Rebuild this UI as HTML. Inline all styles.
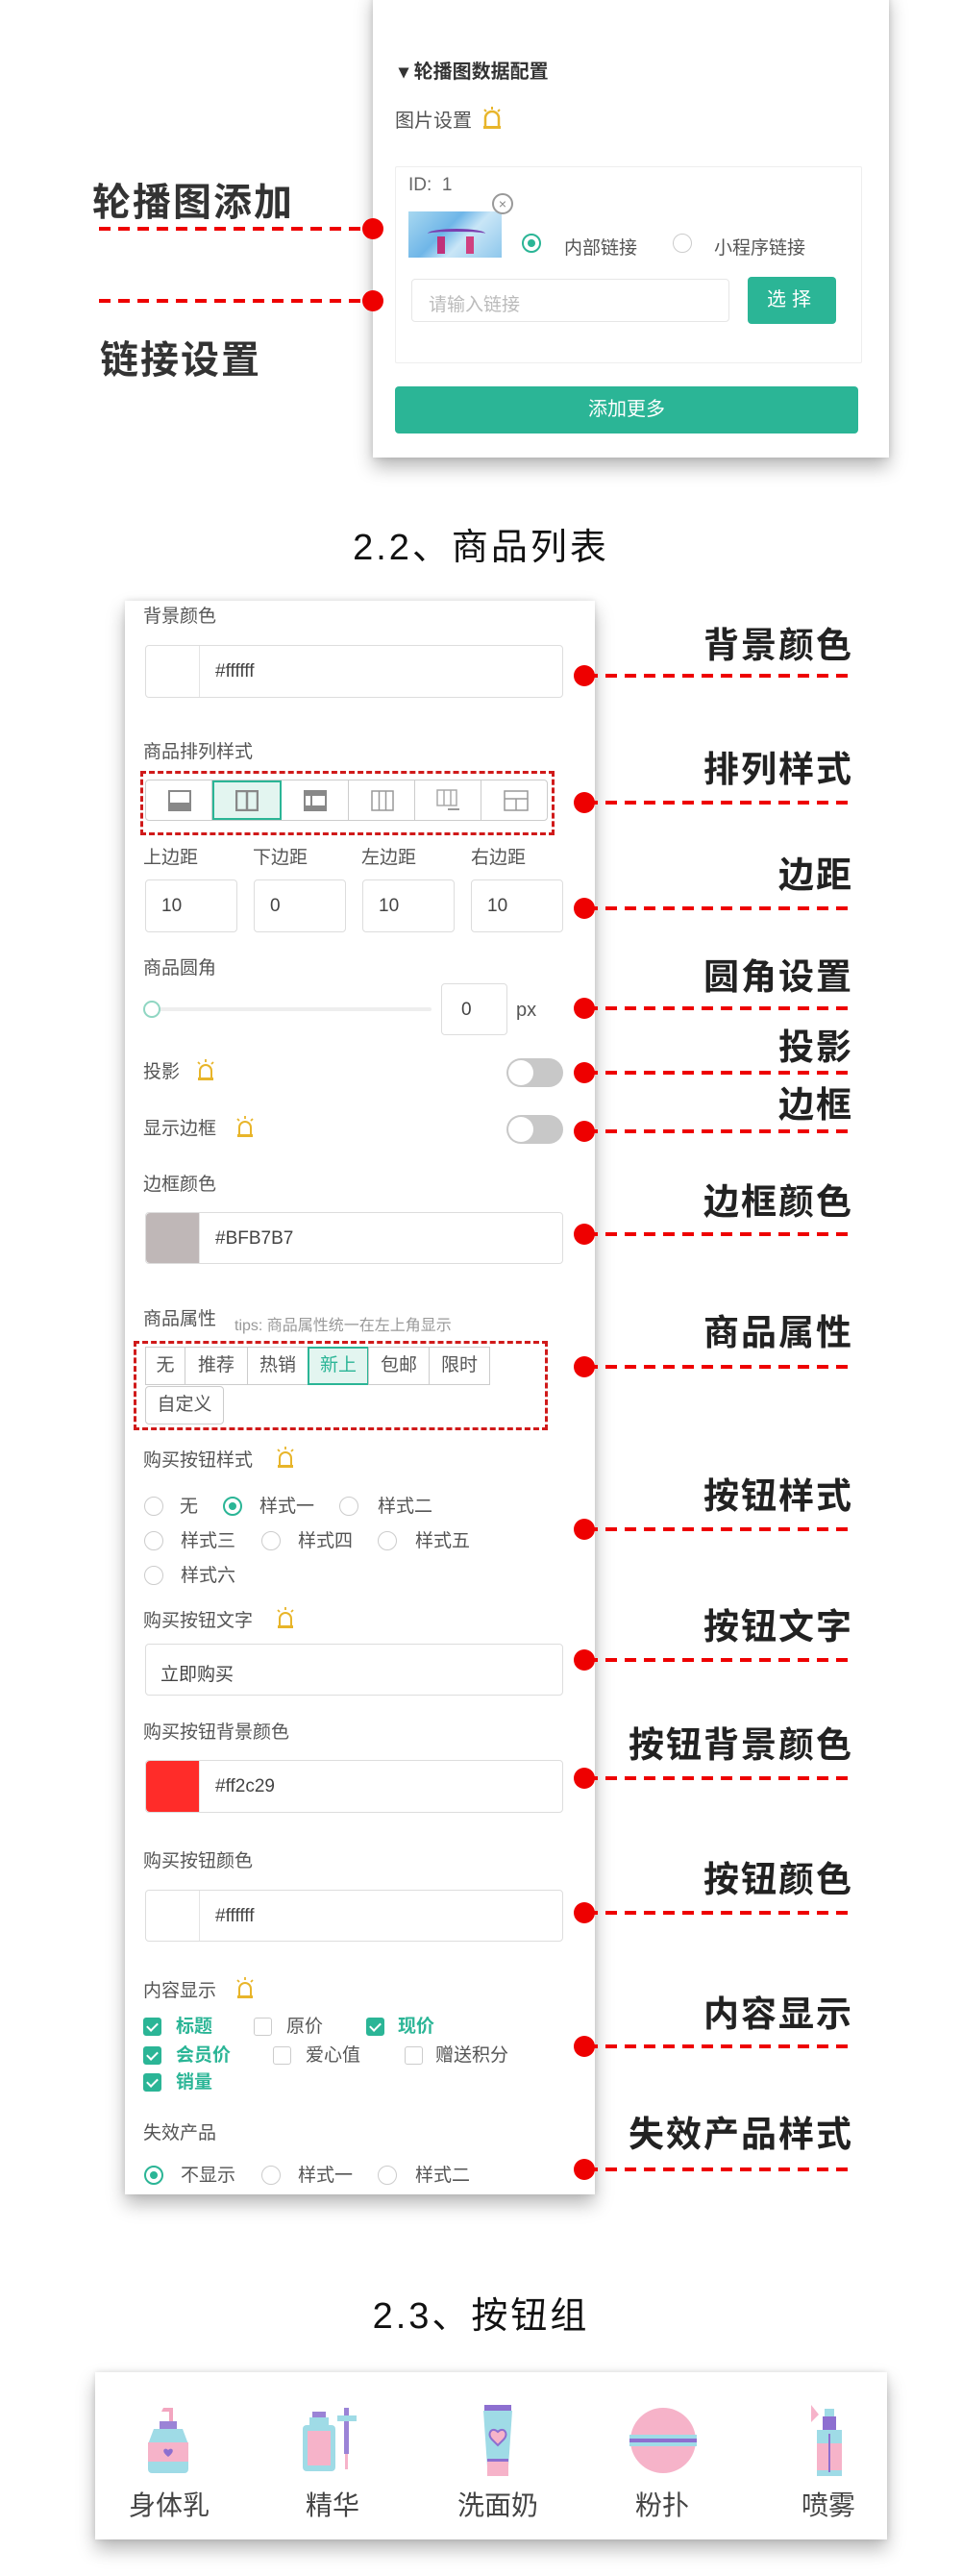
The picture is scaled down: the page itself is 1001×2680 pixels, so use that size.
<!DOCTYPE html>
<html><head><meta charset="utf-8">
<style>
*{margin:0;padding:0;box-sizing:border-box}
body{width:1001px;height:2680px;background:#fff;position:relative;overflow:hidden;font-family:"Liberation Sans","Noto Sans CJK SC",sans-serif;color:#555}
.a{position:absolute;white-space:nowrap}
.panel{position:absolute;background:#fff;box-shadow:0 10px 18px rgba(0,0,0,.28),0 0 6px rgba(0,0,0,.12)}
.lbl{position:absolute;font-size:19px;color:#555;line-height:1;white-space:nowrap}
.inp{position:absolute;border:1px solid #ddd;border-radius:4px;background:#fff}
.ann{position:absolute;font-size:37px;font-weight:bold;color:#222;text-align:right;right:113px;line-height:1;letter-spacing:2px;white-space:nowrap}
.line{position:absolute;height:4px;background:repeating-linear-gradient(90deg,#e00 0 12px,transparent 12px 20px)}
.dot{position:absolute;width:22px;height:22px;border-radius:50%;background:#e00}
.radio{position:absolute;width:20px;height:20px;border:1.5px solid #ccc;border-radius:50%;background:#fff}
.radio.on{border:2px solid #2bb596}
.radio.on::after{content:"";position:absolute;left:4px;top:4px;width:8px;height:8px;border-radius:50%;background:#2bb596}
.cb{position:absolute;width:19px;height:19px;border:1.5px solid #ccc;border-radius:3px;background:#fff}
.cb.on{background:#2bb596;border-color:#2bb596}
.cb.on::after{content:"";position:absolute;left:5px;top:2px;width:5px;height:9px;border:solid #fff;border-width:0 2px 2px 0;transform:rotate(45deg)}
.tog{position:absolute;width:59px;height:30px;border-radius:15px;background:#c8c8c8}
.tog::after{content:"";position:absolute;left:2px;top:2px;width:26px;height:26px;border-radius:50%;background:#fff}
.tag{position:absolute;height:40px;border:1px solid #ccc;font-size:19px;color:#555;line-height:38px;text-align:center;background:#fff}
.sw{position:absolute;left:0;top:0;bottom:0;width:56px;border-right:1px solid #e5e5e5;border-radius:4px 0 0 4px}
</style></head><body>

<!-- top panel -->
<div class="panel" style="left:388px;top:-10px;width:537px;height:486px"></div>
<div class="a" style="left:415px;top:58px;font-size:20px;font-weight:bold;color:#333">▾ 轮播图数据配置</div>
<div class="lbl" style="left:411px;top:116px;font-size:20px">图片设置</div>
<svg class="a" style="left:501px;top:110px" width="22" height="26" viewBox="0 0 22 26"><path d="M4 22V13a7 7 0 0 1 14 0v9" fill="none" stroke="#e8b52a" stroke-width="2.5"/><rect x="2" y="21" width="18" height="3" fill="#e8b52a"/><path d="M11 1v3M3 4l2 2M19 4l-2 2" stroke="#e8b52a" stroke-width="2"/></svg>
<div class="inp" style="left:411px;top:173px;width:486px;height:205px;border-color:#eee;border-radius:2px"></div>
<div class="a" style="left:425px;top:182px;font-size:19px;color:#666">ID:&nbsp;&nbsp;1</div>
<div class="a" style="left:425px;top:220px;width:97px;height:48px;background:linear-gradient(135deg,#a8d8f0,#6fb6e8 40%,#c9e6f7 60%,#8ec7ec);overflow:hidden">
<div style="position:absolute;left:20px;top:18px;width:60px;height:10px;border-top:3px solid #7a3fb0;border-radius:50%"></div>
<div style="position:absolute;left:30px;top:26px;width:8px;height:18px;background:#c0307a"></div>
<div style="position:absolute;left:60px;top:26px;width:8px;height:18px;background:#d04080"></div>
</div>
<div class="a" style="left:512px;top:201px;width:22px;height:22px;border:2px solid #999;border-radius:50%;background:#fff;font-size:14px;line-height:18px;text-align:center;color:#888">×</div>
<div class="radio on" style="left:543px;top:243px"></div>
<div class="a" style="left:587px;top:243px;font-size:19px;color:#555">内部链接</div>
<div class="radio" style="left:700px;top:243px"></div>
<div class="a" style="left:743px;top:243px;font-size:19px;color:#555">小程序链接</div>
<div class="inp" style="left:428px;top:290px;width:331px;height:45px;border-color:#e6e6e6"></div>
<div class="a" style="left:446px;top:302px;font-size:19px;color:#bbb">请输入链接</div>
<div class="a" style="left:778px;top:288px;width:92px;height:49px;background:#2bb596;border-radius:4px;color:#fff;font-size:20px;line-height:49px;text-align:center;letter-spacing:6px">选择</div>
<div class="a" style="left:411px;top:402px;width:482px;height:49px;background:#2bb596;border-radius:4px;color:#fff;font-size:20px;line-height:49px;text-align:center">添加更多</div>

<div class="a" style="left:96px;top:178px;font-size:40px;font-weight:bold;color:#333;letter-spacing:2px">轮播图添加</div>
<div class="line" style="left:103px;top:236px;width:280px"></div><div class="dot" style="left:377px;top:227px"></div>
<div class="line" style="left:103px;top:311px;width:280px"></div><div class="dot" style="left:377px;top:302px"></div>
<div class="a" style="left:104px;top:342px;font-size:40px;font-weight:bold;color:#333;letter-spacing:2px">链接设置</div>

<div class="a" style="left:0;width:1001px;top:538px;text-align:center;font-size:38px;color:#111;letter-spacing:3px">2.2、商品列表</div>

<!-- main panel -->
<div class="panel" style="left:130px;top:625px;width:489px;height:1658px"></div>
<div class="lbl" style="left:149px;top:632px">背景颜色</div>
<div class="inp" style="left:151px;top:671px;width:435px;height:55px"><div class="sw"></div><span class="a" style="left:72px;top:16px;font-size:19px;color:#444">#ffffff</span></div>

<div class="lbl" style="left:149px;top:773px">商品排列样式</div>
<div class="a" style="left:146px;top:802px;width:431px;height:67px;border:3px dashed #d01a1a"></div>
<div class="a" style="left:151px;top:811px;width:419px;height:43px;border:1px solid #ccc;border-radius:4px;display:flex;overflow:hidden">
<div style="flex:1;border-right:1px solid #ccc;position:relative"><svg style="position:absolute;left:23px;top:10px" width="24" height="22"><rect x="1" y="1" width="22" height="20" fill="none" stroke="#888" stroke-width="2"/><rect x="1" y="13" width="22" height="8" fill="#888"/></svg></div>
<div style="flex:1;border:2px solid #2bb596;background:#e3f5f0;position:relative"><svg style="position:absolute;left:22px;top:8px" width="24" height="22"><rect x="1" y="1" width="22" height="20" fill="none" stroke="#888" stroke-width="2.5"/><line x1="12" y1="1" x2="12" y2="21" stroke="#888" stroke-width="2.5"/></svg></div>
<div style="flex:1;border-right:1px solid #ccc;position:relative"><svg style="position:absolute;left:23px;top:10px" width="24" height="22"><rect x="1" y="1" width="22" height="20" fill="none" stroke="#888" stroke-width="2"/><rect x="1" y="1" width="22" height="5" fill="#888"/><rect x="1" y="16" width="22" height="5" fill="#888"/><line x1="8" y1="6" x2="8" y2="16" stroke="#888" stroke-width="2"/></svg></div>
<div style="flex:1;border-right:1px solid #ccc;position:relative"><svg style="position:absolute;left:23px;top:10px" width="24" height="22"><rect x="1" y="1" width="22" height="20" fill="none" stroke="#999" stroke-width="1.5"/><line x1="8.5" y1="1" x2="8.5" y2="21" stroke="#999" stroke-width="1.5"/><line x1="15.5" y1="1" x2="15.5" y2="21" stroke="#999" stroke-width="1.5"/></svg></div>
<div style="flex:1;border-right:1px solid #ccc;position:relative"><svg style="position:absolute;left:22px;top:9px" width="26" height="24"><rect x="1" y="1" width="20" height="16" fill="none" stroke="#aaa" stroke-width="1.5"/><line x1="8" y1="1" x2="8" y2="17" stroke="#aaa" stroke-width="1.5"/><line x1="15" y1="1" x2="15" y2="17" stroke="#aaa" stroke-width="1.5"/><line x1="12" y1="21" x2="24" y2="21" stroke="#999" stroke-width="2"/></svg></div>
<div style="flex:1;position:relative"><svg style="position:absolute;left:23px;top:10px" width="26" height="22"><rect x="1" y="1" width="24" height="20" fill="none" stroke="#999" stroke-width="1.5"/><line x1="1" y1="9" x2="25" y2="9" stroke="#999" stroke-width="1.5"/><line x1="13" y1="9" x2="13" y2="21" stroke="#999" stroke-width="1.5"/></svg></div>
</div>

<div class="lbl" style="left:149px;top:883px">上边距</div><div class="lbl" style="left:263px;top:883px">下边距</div><div class="lbl" style="left:376px;top:883px">左边距</div><div class="lbl" style="left:490px;top:883px">右边距</div>
<div class="inp" style="left:151px;top:915px;width:96px;height:55px"><span class="a" style="left:16px;top:16px;font-size:19px;color:#444">10</span></div>
<div class="inp" style="left:264px;top:915px;width:96px;height:55px"><span class="a" style="left:16px;top:16px;font-size:19px;color:#444">0</span></div>
<div class="inp" style="left:377px;top:915px;width:96px;height:55px"><span class="a" style="left:16px;top:16px;font-size:19px;color:#444">10</span></div>
<div class="inp" style="left:490px;top:915px;width:96px;height:55px"><span class="a" style="left:16px;top:16px;font-size:19px;color:#444">10</span></div>

<div class="lbl" style="left:149px;top:998px">商品圆角</div>
<div class="a" style="left:158px;top:1048px;width:291px;height:4px;background:#eee;border-radius:2px"></div>
<div class="a" style="left:149px;top:1041px;width:18px;height:18px;border:2px solid #8fd6c2;border-radius:50%;background:#fff"></div>
<div class="inp" style="left:459px;top:1023px;width:69px;height:54px"><span class="a" style="left:20px;top:16px;font-size:19px;color:#444">0</span></div>
<div class="a" style="left:537px;top:1040px;font-size:20px;color:#555">px</div>

<div class="lbl" style="left:149px;top:1106px">投影</div>
<svg class="a" style="left:204px;top:1102px" width="20" height="24" viewBox="0 0 20 24"><path d="M4 20v-8a6 6 0 0 1 12 0v8" fill="none" stroke="#e8b52a" stroke-width="2"/><rect x="2" y="19" width="16" height="3" fill="#e8b52a"/><path d="M10 0v3M2 3l2 2M18 3l-2 2" stroke="#e8b52a" stroke-width="1.8"/></svg>
<div class="tog" style="left:527px;top:1101px"></div>
<div class="lbl" style="left:149px;top:1165px">显示边框</div>
<svg class="a" style="left:245px;top:1161px" width="20" height="24" viewBox="0 0 20 24"><path d="M4 20v-8a6 6 0 0 1 12 0v8" fill="none" stroke="#e8b52a" stroke-width="2"/><rect x="2" y="19" width="16" height="3" fill="#e8b52a"/><path d="M10 0v3M2 3l2 2M18 3l-2 2" stroke="#e8b52a" stroke-width="1.8"/></svg>
<div class="tog" style="left:527px;top:1160px"></div>

<div class="lbl" style="left:149px;top:1223px">边框颜色</div>
<div class="inp" style="left:151px;top:1261px;width:435px;height:54px"><div class="sw" style="background:#bfb7b7"></div><span class="a" style="left:72px;top:16px;font-size:19px;color:#444">#BFB7B7</span></div>

<div class="lbl" style="left:149px;top:1363px">商品属性</div>
<div class="a" style="left:244px;top:1365px;font-size:16px;color:#999">tips: 商品属性统一在左上角显示</div>
<div class="a" style="left:139px;top:1395px;width:431px;height:93px;border:3px dashed #d01a1a"></div>
<div class="tag" style="left:151px;top:1401px;width:42px">无</div>
<div class="tag" style="left:192px;top:1401px;width:66px">推荐</div>
<div class="tag" style="left:257px;top:1401px;width:64px">热销</div>
<div class="tag" style="left:320px;top:1401px;width:64px;border:2px solid #2bb596;background:#e3f5f0;color:#2bb596;line-height:36px">新上</div>
<div class="tag" style="left:383px;top:1401px;width:64px">包邮</div>
<div class="tag" style="left:446px;top:1401px;width:64px">限时</div>
<div class="tag" style="left:151px;top:1442px;width:82px;border-radius:4px">自定义</div>

<div class="lbl" style="left:149px;top:1510px">购买按钮样式</div>
<svg class="a" style="left:287px;top:1505px" width="20" height="24" viewBox="0 0 20 24"><path d="M4 20v-8a6 6 0 0 1 12 0v8" fill="none" stroke="#e8b52a" stroke-width="2"/><rect x="2" y="19" width="16" height="3" fill="#e8b52a"/><path d="M10 0v3M2 3l2 2M18 3l-2 2" stroke="#e8b52a" stroke-width="1.8"/></svg>
<div class="radio" style="left:150px;top:1557px"></div><div class="lbl" style="left:187px;top:1558px">无</div>
<div class="radio on" style="left:232px;top:1557px"></div><div class="lbl" style="left:270px;top:1558px">样式一</div>
<div class="radio" style="left:353px;top:1557px"></div><div class="lbl" style="left:393px;top:1558px">样式二</div>
<div class="radio" style="left:150px;top:1593px"></div><div class="lbl" style="left:188px;top:1594px">样式三</div>
<div class="radio" style="left:272px;top:1593px"></div><div class="lbl" style="left:310px;top:1594px">样式四</div>
<div class="radio" style="left:393px;top:1593px"></div><div class="lbl" style="left:432px;top:1594px">样式五</div>
<div class="radio" style="left:150px;top:1629px"></div><div class="lbl" style="left:188px;top:1630px">样式六</div>

<div class="lbl" style="left:149px;top:1677px">购买按钮文字</div>
<svg class="a" style="left:287px;top:1672px" width="20" height="24" viewBox="0 0 20 24"><path d="M4 20v-8a6 6 0 0 1 12 0v8" fill="none" stroke="#e8b52a" stroke-width="2"/><rect x="2" y="19" width="16" height="3" fill="#e8b52a"/><path d="M10 0v3M2 3l2 2M18 3l-2 2" stroke="#e8b52a" stroke-width="1.8"/></svg>
<div class="inp" style="left:151px;top:1710px;width:435px;height:54px"><span class="a" style="left:15px;top:16px;font-size:19px;color:#444">立即购买</span></div>

<div class="lbl" style="left:149px;top:1793px">购买按钮背景颜色</div>
<div class="inp" style="left:151px;top:1831px;width:435px;height:55px"><div class="sw" style="background:#ff2c29"></div><span class="a" style="left:72px;top:16px;font-size:19px;color:#444">#ff2c29</span></div>

<div class="lbl" style="left:149px;top:1927px">购买按钮颜色</div>
<div class="inp" style="left:151px;top:1966px;width:435px;height:54px"><div class="sw"></div><span class="a" style="left:72px;top:16px;font-size:19px;color:#444">#ffffff</span></div>

<div class="lbl" style="left:149px;top:2062px">内容显示</div>
<svg class="a" style="left:245px;top:2057px" width="20" height="24" viewBox="0 0 20 24"><path d="M4 20v-8a6 6 0 0 1 12 0v8" fill="none" stroke="#e8b52a" stroke-width="2"/><rect x="2" y="19" width="16" height="3" fill="#e8b52a"/><path d="M10 0v3M2 3l2 2M18 3l-2 2" stroke="#e8b52a" stroke-width="1.8"/></svg>
<div class="cb on" style="left:149px;top:2099px"></div><div class="lbl" style="left:183px;top:2099px;color:#2bb596;font-weight:bold">标题</div>
<div class="cb" style="left:264px;top:2099px"></div><div class="lbl" style="left:298px;top:2099px">原价</div>
<div class="cb on" style="left:381px;top:2099px"></div><div class="lbl" style="left:414px;top:2099px;color:#2bb596;font-weight:bold">现价</div>
<div class="cb on" style="left:149px;top:2129px"></div><div class="lbl" style="left:183px;top:2129px;color:#2bb596;font-weight:bold">会员价</div>
<div class="cb" style="left:284px;top:2129px"></div><div class="lbl" style="left:318px;top:2129px">爱心值</div>
<div class="cb" style="left:421px;top:2129px"></div><div class="lbl" style="left:453px;top:2129px">赠送积分</div>
<div class="cb on" style="left:149px;top:2157px"></div><div class="lbl" style="left:183px;top:2157px;color:#2bb596;font-weight:bold">销量</div>

<div class="lbl" style="left:149px;top:2210px">失效产品</div>
<div class="radio on" style="left:150px;top:2253px"></div><div class="lbl" style="left:188px;top:2254px">不显示</div>
<div class="radio" style="left:272px;top:2253px"></div><div class="lbl" style="left:310px;top:2254px">样式一</div>
<div class="radio" style="left:393px;top:2253px"></div><div class="lbl" style="left:432px;top:2254px">样式二</div>

<!-- annotations -->
<div class="ann" style="top:653px">背景颜色</div><div class="dot" style="left:597px;top:692px"></div><div class="line" style="left:610px;top:701px;width:275px"></div>
<div class="ann" style="top:782px">排列样式</div><div class="dot" style="left:597px;top:824px"></div><div class="line" style="left:610px;top:833px;width:275px"></div>
<div class="ann" style="top:892px">边距</div><div class="dot" style="left:597px;top:934px"></div><div class="line" style="left:610px;top:943px;width:275px"></div>
<div class="ann" style="top:998px">圆角设置</div><div class="dot" style="left:597px;top:1038px"></div><div class="line" style="left:610px;top:1047px;width:275px"></div>
<div class="ann" style="top:1071px">投影</div><div class="dot" style="left:597px;top:1105px"></div><div class="line" style="left:610px;top:1114px;width:275px"></div>
<div class="ann" style="top:1131px">边框</div><div class="dot" style="left:597px;top:1166px"></div><div class="line" style="left:610px;top:1175px;width:275px"></div>
<div class="ann" style="top:1232px">边框颜色</div><div class="dot" style="left:597px;top:1273px"></div><div class="line" style="left:610px;top:1282px;width:275px"></div>
<div class="ann" style="top:1368px">商品属性</div><div class="dot" style="left:597px;top:1411px"></div><div class="line" style="left:610px;top:1420px;width:275px"></div>
<div class="ann" style="top:1538px">按钮样式</div><div class="dot" style="left:597px;top:1580px"></div><div class="line" style="left:610px;top:1589px;width:275px"></div>
<div class="ann" style="top:1674px">按钮文字</div><div class="dot" style="left:597px;top:1716px"></div><div class="line" style="left:610px;top:1725px;width:275px"></div>
<div class="ann" style="top:1797px">按钮背景颜色</div><div class="dot" style="left:597px;top:1839px"></div><div class="line" style="left:610px;top:1848px;width:275px"></div>
<div class="ann" style="top:1937px">按钮颜色</div><div class="dot" style="left:597px;top:1979px"></div><div class="line" style="left:610px;top:1988px;width:275px"></div>
<div class="ann" style="top:2077px">内容显示</div><div class="dot" style="left:597px;top:2118px"></div><div class="line" style="left:610px;top:2127px;width:275px"></div>
<div class="ann" style="top:2202px">失效产品样式</div><div class="dot" style="left:597px;top:2246px"></div><div class="line" style="left:610px;top:2255px;width:275px"></div>

<div class="a" style="left:0;width:1001px;top:2378px;text-align:center;font-size:38px;color:#111;letter-spacing:3px">2.3、按钮组</div>

<!-- button group panel -->
<div class="panel" style="left:99px;top:2468px;width:824px;height:174px"></div>
<svg class="a" style="left:148px;top:2503px" width="54" height="72" viewBox="0 0 54 72">
<path d="M22 2h10v14h-4V6h-8z" fill="#f3a6c0"/><rect x="18" y="16" width="18" height="8" fill="#9b83d6"/>
<path d="M12 24h30l6 16v26a4 4 0 0 1-4 4H10a4 4 0 0 1-4-4V40z" fill="#9fdbe6"/>
<rect x="6" y="38" width="42" height="20" fill="#f6b3c9"/><path d="M23 45a3 3 0 0 1 4 1a3 3 0 0 1 4-1c2 2 0 5-4 8c-4-3-6-6-4-8z" fill="#8d6fd0"/></svg>
<svg class="a" style="left:313px;top:2503px" width="66" height="72" viewBox="0 0 66 72">
<rect x="12" y="6" width="14" height="6" fill="#9b83d6"/><rect x="9" y="12" width="20" height="8" fill="#9fdbe6"/>
<rect x="2" y="20" width="34" height="48" rx="4" fill="#9fdbe6"/><rect x="7" y="26" width="24" height="36" fill="#f6b3c9"/>
<rect x="45" y="2" width="5" height="10" fill="#9b83d6"/><rect x="38" y="10" width="20" height="6" fill="#9fdbe6"/><rect x="45" y="16" width="5" height="34" fill="#9b83d6"/><rect x="46" y="50" width="3" height="16" fill="#f6b3c9"/></svg>
<svg class="a" style="left:495px;top:2500px" width="46" height="78" viewBox="0 0 46 78">
<rect x="9" y="2" width="28" height="6" fill="#8d6fd0"/><path d="M8 8h30l-4 58H12z" fill="#9fdbe6"/><rect x="12" y="58" width="22" height="18" fill="#f6b3c9"/><rect x="12" y="58" width="22" height="3" fill="#8d6fd0"/>
<path d="M23 30c-6-6-12 2-6 8l6 6 6-6c6-6 0-14-6-8z" fill="#f6b3c9" stroke="#8d6fd0" stroke-width="2"/></svg>
<svg class="a" style="left:653px;top:2503px" width="74" height="72" viewBox="0 0 74 72">
<ellipse cx="37" cy="36" rx="34" ry="34" fill="#f6b3c9"/><rect x="2" y="30" width="70" height="12" fill="#9fdbe6"/><rect x="2" y="34" width="70" height="4" fill="#8d6fd0"/></svg>
<svg class="a" style="left:838px;top:2498px" width="46" height="82" viewBox="0 0 46 82">
<path d="M6 4l8 10-8 8z" fill="#f6b3c9"/><rect x="20" y="8" width="10" height="8" fill="#9fdbe6"/><rect x="18" y="16" width="14" height="14" fill="#8d6fd0"/>
<rect x="12" y="30" width="26" height="48" fill="#9fdbe6"/><rect x="12" y="44" width="26" height="28" fill="#f6b3c9"/><rect x="24" y="34" width="2" height="40" fill="#8d6fd0"/></svg>
<div class="a" style="left:134px;top:2585px;width:80px;text-align:center;font-size:28px;color:#444">身体乳</div>
<div class="a" style="left:306px;top:2585px;width:80px;text-align:center;font-size:28px;color:#444">精华</div>
<div class="a" style="left:468px;top:2585px;width:100px;text-align:center;font-size:28px;color:#444">洗面奶</div>
<div class="a" style="left:649px;top:2585px;width:80px;text-align:center;font-size:28px;color:#444">粉扑</div>
<div class="a" style="left:822px;top:2585px;width:80px;text-align:center;font-size:28px;color:#444">喷雾</div>
</body></html>
